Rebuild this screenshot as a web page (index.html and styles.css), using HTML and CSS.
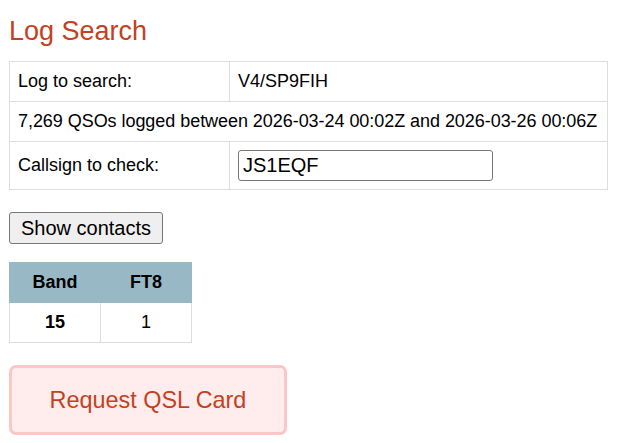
FILE: index.html
```html
<!DOCTYPE html>
<html>
<head>
<meta charset="utf-8">
<title>Log Search</title>
<link rel="stylesheet" href="styles.css">
</head>
<body>
<h1 class="title">Log Search</h1>
<form class="search">
<table class="info">
  <tr><td class="label">Log to search:</td><td>V4/SP9FIH</td></tr>
  <tr><td class="summary" colspan="2">7,269 QSOs logged between 2026-03-24 00:02Z and 2026-03-26 00:06Z</td></tr>
  <tr><td class="label">Callsign to check:</td><td><input class="call" type="text" value="JS1EQF"></td></tr>
</table>
<button class="show" type="button">Show contacts</button>
</form>
<table class="bands">
  <tr><th>Band</th><th>FT8</th></tr>
  <tr><td class="band">15</td><td>1</td></tr>
</table>
<button class="qsl" type="button">Request QSL Card</button>
</body>
</html>
```
FILE: styles.css
```css
body {
  margin: 0;
  padding: 9px;
  font-family: "Liberation Sans", Arial, sans-serif;
  font-size: 18px;
  color: #000;
  background: #fff;
}
.title {
  margin: 7px 0 15px;
  font-size: 27px;
  font-weight: normal;
  line-height: 30px;
  color: #c4411e;
}
.info {
  border-collapse: collapse;
  table-layout: fixed;
  width: 599px;
}
.info td {
  border: 1px solid #dddddd;
  padding: 8px 8px;
  line-height: 23px;
  vertical-align: middle;
}
.info td.summary {
  white-space: nowrap;
  overflow: visible;
  letter-spacing: -0.05px;
}
.info td.label {
  width: 203px;
}
.call {
  box-sizing: border-box;
  width: 255px;
  height: 31px;
  margin: 0;
  padding: 1px 4px;
  font-family: "Liberation Sans", Arial, sans-serif;
  font-size: 20px;
  border: 1px solid #767676;
  border-radius: 3px;
  display: block;
}
.show {
  display: block;
  margin: 22px 0 0;
  box-sizing: border-box;
  width: 154px;
  height: 32px;
  padding: 0 6px;
  font-family: "Liberation Sans", Arial, sans-serif;
  font-size: 20px;
  color: #000;
  background: #efefef;
  border: 1px solid #767676;
  border-radius: 3px;
}
.bands {
  margin-top: 18px;
  border-collapse: collapse;
  table-layout: fixed;
  width: 183px;
}
.bands th, .bands td {
  width: 50%;
  border: 1px solid #dddddd;
  padding: 8px;
  line-height: 23px;
  text-align: center;
}
.bands th {
  background: #99b8c6;
  border-color: #99b8c6;
  font-weight: bold;
}
.bands td.band {
  font-weight: bold;
}
.qsl {
  display: block;
  margin-top: 22px;
  box-sizing: border-box;
  width: 278px;
  height: 70px;
  font-family: "Liberation Sans", Arial, sans-serif;
  font-size: 23.4px;
  color: #c4411e;
  background: #ffecec;
  border: 3px solid #fcc6c6;
  border-radius: 7px;
}
```
